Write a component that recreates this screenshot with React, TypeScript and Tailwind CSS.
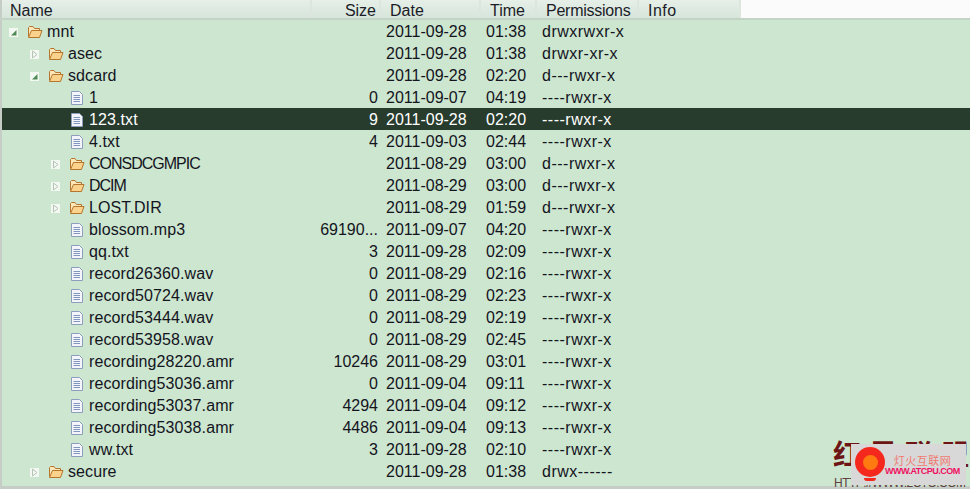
const FONT = "font-['Liberation_Sans',sans-serif]"

type Row = {
  name: string
  depth: number
  kind: "file" | "folder"
  toggle?: "open" | "closed"
  size?: string
  date: string
  time: string
  perms: string
  selected?: boolean
  narrow?: boolean
}

const rows: Row[] = [
  { name: "mnt", depth: 0, kind: "folder", toggle: "open", date: "2011-09-28", time: "01:38", perms: "drwxrwxr-x" },
  { name: "asec", depth: 1, kind: "folder", toggle: "closed", date: "2011-09-28", time: "01:38", perms: "drwxr-xr-x" },
  { name: "sdcard", depth: 1, kind: "folder", toggle: "open", date: "2011-09-28", time: "02:20", perms: "d---rwxr-x" },
  { name: "1", depth: 2, kind: "file", size: "0", date: "2011-09-07", time: "04:19", perms: "----rwxr-x" },
  { name: "123.txt", depth: 2, kind: "file", size: "9", date: "2011-09-28", time: "02:20", perms: "----rwxr-x", selected: true },
  { name: "4.txt", depth: 2, kind: "file", size: "4", date: "2011-09-03", time: "02:44", perms: "----rwxr-x" },
  { name: "CONSDCGMPIC", depth: 2, kind: "folder", toggle: "closed", date: "2011-08-29", time: "03:00", perms: "d---rwxr-x", narrow: true },
  { name: "DCIM", depth: 2, kind: "folder", toggle: "closed", date: "2011-08-29", time: "03:00", perms: "d---rwxr-x", narrow: true },
  { name: "LOST.DIR", depth: 2, kind: "folder", toggle: "closed", date: "2011-08-29", time: "01:59", perms: "d---rwxr-x" },
  { name: "blossom.mp3", depth: 2, kind: "file", size: "69190...", date: "2011-09-07", time: "04:20", perms: "----rwxr-x" },
  { name: "qq.txt", depth: 2, kind: "file", size: "3", date: "2011-09-28", time: "02:09", perms: "----rwxr-x" },
  { name: "record26360.wav", depth: 2, kind: "file", size: "0", date: "2011-08-29", time: "02:16", perms: "----rwxr-x" },
  { name: "record50724.wav", depth: 2, kind: "file", size: "0", date: "2011-08-29", time: "02:23", perms: "----rwxr-x" },
  { name: "record53444.wav", depth: 2, kind: "file", size: "0", date: "2011-08-29", time: "02:19", perms: "----rwxr-x" },
  { name: "record53958.wav", depth: 2, kind: "file", size: "0", date: "2011-08-29", time: "02:45", perms: "----rwxr-x" },
  { name: "recording28220.amr", depth: 2, kind: "file", size: "10246", date: "2011-08-29", time: "03:01", perms: "----rwxr-x" },
  { name: "recording53036.amr", depth: 2, kind: "file", size: "0", date: "2011-09-04", time: "09:11", perms: "----rwxr-x" },
  { name: "recording53037.amr", depth: 2, kind: "file", size: "4294", date: "2011-09-04", time: "09:12", perms: "----rwxr-x" },
  { name: "recording53038.amr", depth: 2, kind: "file", size: "4486", date: "2011-09-04", time: "09:13", perms: "----rwxr-x" },
  { name: "ww.txt", depth: 2, kind: "file", size: "3", date: "2011-09-28", time: "02:10", perms: "----rwxr-x" },
  { name: "secure", depth: 1, kind: "folder", toggle: "closed", date: "2011-09-28", time: "01:38", perms: "drwx------" },
]

function FolderIcon() {
  return (
    <svg width="16" height="14" viewBox="0 0 16 14">
      <path d="M1.5 11.5V2.5L2.5 1.5H6L7.5 3.5H12.5V5.5" fill="#fde7b8" stroke="#b5752d" />
      <path d="M1.5 12.5L4.5 5.5H15L12.5 12.5Z" fill="#fbd28c" stroke="#b5752d" />
    </svg>
  )
}

function FileIcon() {
  return (
    <svg width="12" height="14" viewBox="0 0 12 14">
      <path d="M0.5 0.5H8.5L11.5 3.5V13.5H0.5Z" fill="#f3f5fa" stroke="#8d9dbb" />
      <path d="M2.5 4.5H9M2.5 6.5H9M2.5 8.5H9M2.5 10.5H9" stroke="#8096bd" />
    </svg>
  )
}

function Toggle({ state }: { state: "open" | "closed" }) {
  return (
    <svg width="9" height="9" viewBox="0 0 9 9">
      <rect width="9" height="9" fill="#f4f8f3" />
      {state === "open" ? (
        <path d="M7.5 2V7.5H2Z" fill="#4f8a55" />
      ) : (
        <path d="M2.5 1L7 4.5L2.5 8Z" fill="#f4f8f3" stroke="#b5c4b5" />
      )}
    </svg>
  )
}

function TreeRow({ row }: { row: Row }) {
  const indent = row.depth === 0 ? "pl-[7px]" : row.depth === 1 ? "pl-[28px]" : "pl-[49px]"
  return (
    <div className={`flex h-[22px] items-center pt-[2px] text-[16px] ${row.selected ? "bg-[#283c2d] text-white" : "text-[#14141e]"}`}>
      <div className={`flex w-[310px] shrink-0 items-center ${indent}`}>
        <span className="flex w-[18px] shrink-0 items-center">{row.toggle && <Toggle state={row.toggle} />}</span>
        <span className={`flex w-[20px] shrink-0 items-center ${row.kind === "file" ? "pl-[2px]" : ""}`}>
          {row.kind === "folder" ? <FolderIcon /> : <FileIcon />}
        </span>
        <span className={`whitespace-nowrap ${row.narrow ? "tracking-[-1px]" : "tracking-[0.1px]"}`}>{row.name}</span>
      </div>
      <div className="w-[66px] shrink-0 text-right">{row.size}</div>
      <div className="w-[108px] shrink-0 pl-[8px]">{row.date}</div>
      <div className="w-[56px] shrink-0">{row.time}</div>
      <div className="shrink-0 tracking-[0.5px]">{row.perms}</div>
    </div>
  )
}

function HeaderCell({ label, className }: { label: string; className: string }) {
  return <div className={`flex h-full shrink-0 items-center border-r-2 border-[#dce6dc] pt-[3px] text-[16px] text-[#1c1c28] ${className}`}>{label}</div>
}

export default function App() {
  return (
    <div className={`relative flex h-[489px] w-[970px] flex-col overflow-hidden bg-[#cce6cf] ${FONT}`}>
      <div className="flex h-[20px] shrink-0 border-b-2 border-[#c3d3c6] bg-[#fbfbfb]">
        <div className="flex h-full border-l-2 border-[#c6cdc6] bg-gradient-to-b from-[#e6efe8] to-[#d6e5da]">
          <HeaderCell label="Name" className="w-[310px] pl-[8px]" />
          <HeaderCell label="Size" className="w-[69px] justify-end pr-[3px]" />
          <HeaderCell label="Date" className="w-[100px] pl-[9px]" />
          <HeaderCell label="Time" className="w-[56px] pl-[9px]" />
          <HeaderCell label="Permissions" className="w-[102px] pl-[9px] tracking-[-0.25px]" />
          <HeaderCell label="Info" className="w-[102px] pl-[9px] tracking-[0.5px]" />
        </div>
      </div>
      <div className="flex min-h-0 flex-1 flex-col border-l-2 border-[#c6cdc6]">
        {rows.map((row) => (
          <TreeRow key={row.name} row={row} />
        ))}
      </div>
      <div className="h-[3px] shrink-0 bg-[#c6cdc6]" />

      {/* site watermarks over the corner */}
      <div className="absolute top-[439px] left-[833px] flex gap-[8px] font-['Noto_Sans_CJK_SC',sans-serif] text-[28px] leading-none font-bold text-[#6d1414]">
        <span>红</span>
        <span>黑</span>
        <span>联</span>
        <span>盟</span>
      </div>
      <div className="absolute top-[477px] left-[834px] text-[12px] leading-[12px] tracking-[-0.5px] whitespace-nowrap text-[#5e4040]">
        HTTP://WWW.2CTO.COM
      </div>
      <div className="absolute top-[444px] left-[851px] flex h-[41px] w-[115px] items-start bg-[#d8d8d8]">
        <div className="relative mt-[3px] ml-[4px] flex h-[30px] w-[30px] shrink-0 items-center justify-center rounded-full bg-[#f5281e]">
          <div className="h-[15px] w-[15px] rounded-full bg-[#ff7a10]" />
          <div className="absolute -bottom-[4px] h-[3px] w-[12px] rounded-b-full bg-[#f5281e]" />
        </div>
        <div className="mt-[11px] flex flex-col items-center">
          <span className="font-['Noto_Sans_CJK_SC',sans-serif] text-[11px] leading-[11px] tracking-[0.5px] text-[#f07a70]">灯火互联网</span>
          <span className="text-[9px] leading-[11px] font-bold tracking-[-0.5px] text-[#ee1160]">WWW.ATCPU.COM</span>
        </div>
      </div>
    </div>
  )
}
